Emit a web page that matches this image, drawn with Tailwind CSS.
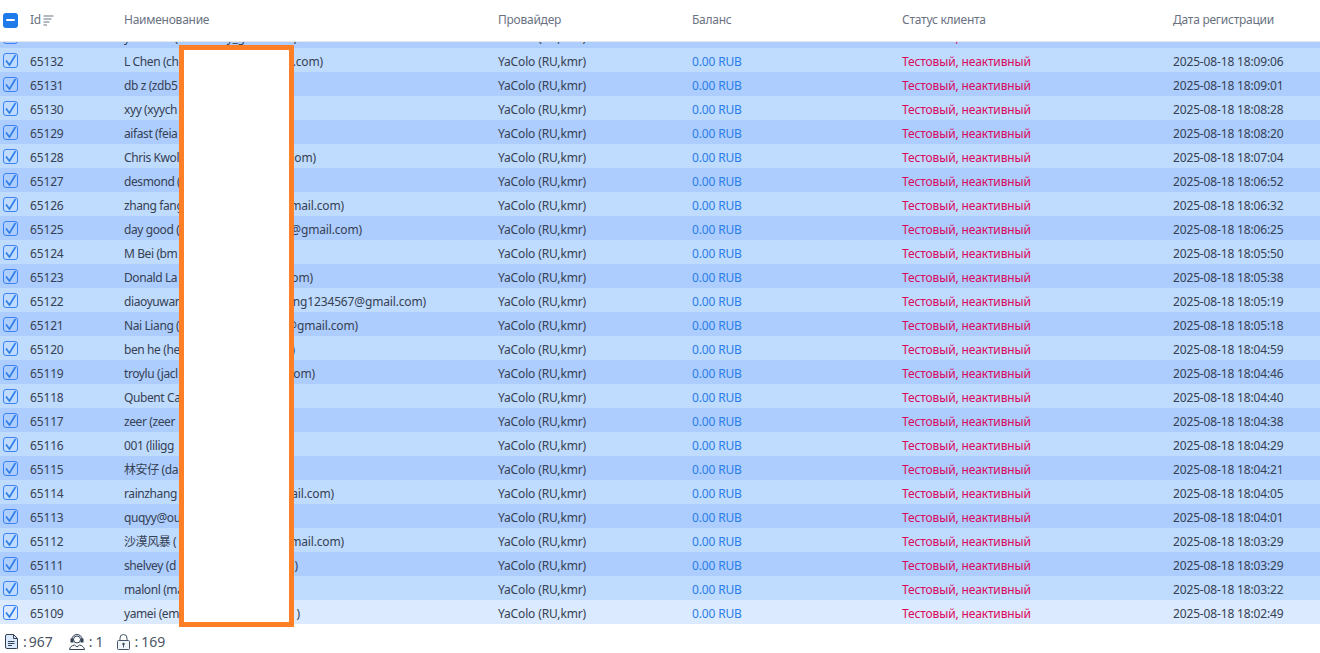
<!DOCTYPE html>
<html lang="ru">
<head>
    <meta charset="UTF-8">
    <title>Клиенты</title>
    <script src="https://cdn.jsdelivr.net/npm/@tailwindcss/browser@4"></script>
</head>
<body class="bg-white overflow-hidden font-['Noto_Sans','Noto_Sans_CJK_SC',sans-serif] text-xs tracking-[-0.15px] text-gray-700">
<div class="relative h-[653px] w-[1320px] flex flex-col">
    <!-- header -->
    <div class="relative z-10 h-[42px] shrink-0 grid grid-cols-[30px_94px_374px_194px_210px_271px_147px] items-center bg-white pb-px tracking-[-0.25px] text-gray-500 border-b border-gray-200">
        <div class="pl-[3px]">
            <span class="flex h-[15px] w-[15px] items-center justify-center rounded-[3px] bg-[#1f7aea]"><span class="h-[2px] w-[9px] rounded-sm bg-white"></span></span>
        </div>
        <div class="flex items-center gap-[2px]">Id
            <svg width="11" height="11" viewBox="0 0 11 11" fill="none" stroke="#6b7280" stroke-width="1"><path d="M0.500 1h10M0.500 4h8M0.500 7h6M0.500 10h3.500"/></svg>
        </div>
        <div>Наименование</div>
        <div>Провайдер</div>
        <div>Баланс</div>
        <div>Статус клиента</div>
        <div>Дата регистрации</div>
    </div>

    <!-- rows -->
    <div id="rows" class="h-[582px] shrink-0 overflow-hidden"></div>

    <!-- footer -->
    <div class="flex h-[29px] shrink-0 items-center pl-[5px] pt-[6px] text-sm leading-none tracking-normal text-gray-600">
        <svg width="13" height="16" viewBox="0 0 13 16" fill="#dbeafe" stroke="#334155" stroke-width="1"><path d="M0.500 2a1.500 1.500 0 0 1 1.500-1.500h6.500l4 4v9.500a.5 .5 0 0 1-1 .5H2a1.500 1.500 0 0 1-1.500-1.500z"/><path d="M8.500 .5v4h4" fill="none"/><path d="M3 7.500h6.500M3 9.500h6.500M3 11.500h4" fill="none"/></svg>
        <span class="ml-[5px]">:</span><span class="ml-[2px]">967</span>
        <svg class="ml-[16px]" width="16" height="16" viewBox="0 0 16 16" fill="none" stroke="#334155" stroke-width="1"><circle cx="8" cy="5.500" r="3.500"/><path d="M3 6.500v-1.500a5 4.500 0 0 1 10 0v1.500"/><path d="M.5 15.500c.3-2.500 2.500-4 5-4.500l2.500 2 2.500-2c2.500 .5 4.700 2 5 4.500z"/><rect x="2" y="5" width="2" height="3" fill="#334155"/><rect x="12" y="5" width="2" height="3" fill="#334155"/></svg>
        <span class="ml-[4px]">:</span><span class="ml-[3px]">1</span>
        <svg class="ml-[13px]" width="13" height="16" viewBox="0 0 13 16" fill="#f1f5f9" stroke="#475569" stroke-width="1"><path d="M3 7v-3a3.500 3.500 0 0 1 7 0v3" fill="none"/><rect x="0.500" y="6.500" width="12" height="9" rx="1"/><circle cx="6.500" cy="10" r="1.200" fill="#334155" stroke="none"/><path d="M6.500 10.500v3"/></svg>
        <span class="ml-[5px]">:</span><span class="ml-[3px]">169</span>
    </div>

    <!-- redaction box over the names -->
    <div class="absolute left-[179px] top-[45px] z-20 h-[582px] w-[115px] border-[5px] border-[#ff7f27] bg-white"></div>
</div>

<script>
    // id, date, visible start of the name, visible end of the name, x where the name ends
    const clients = [
        ['', '', 'ynnnnnn (nnnnnnny_gnnnnnnn)', '', 0],
        ['65132', '2025-08-18 18:09:06', 'L Chen (ch', '.com)', 323],
        ['65131', '2025-08-18 18:09:01', 'db z (zdb5', '', 0],
        ['65130', '2025-08-18 18:08:28', 'xyy (xyych', '', 0],
        ['65129', '2025-08-18 18:08:20', 'aifast (feia', '', 0],
        ['65128', '2025-08-18 18:07:04', 'Chris Kwol', 'om)', 316],
        ['65127', '2025-08-18 18:06:52', 'desmond (', '', 0],
        ['65126', '2025-08-18 18:06:32', 'zhang fang', 'mail.com)', 344],
        ['65125', '2025-08-18 18:06:25', 'day good (', '@gmail.com)', 362],
        ['65124', '2025-08-18 18:05:50', 'M Bei (bm', '', 0],
        ['65123', '2025-08-18 18:05:38', 'Donald La', 'om)', 313],
        ['65122', '2025-08-18 18:05:19', 'diaoyuwan', 'ng1234567@gmail.com)', 426],
        ['65121', '2025-08-18 18:05:18', 'Nai Liang (', '@gmail.com)', 358],
        ['65120', '2025-08-18 18:04:59', 'ben he (he', ')', 295],
        ['65119', '2025-08-18 18:04:46', 'troylu (jacl', 'om)', 315],
        ['65118', '2025-08-18 18:04:40', 'Qubent Ca', '', 0],
        ['65117', '2025-08-18 18:04:38', 'zeer (zeer', '', 0],
        ['65116', '2025-08-18 18:04:29', '001 (liligg', '', 0],
        ['65115', '2025-08-18 18:04:21', '林安仔 (da', '', 0],
        ['65114', '2025-08-18 18:04:05', 'rainzhang', 'ail.com)', 334],
        ['65113', '2025-08-18 18:04:01', 'quqyy@ou', '', 0],
        ['65112', '2025-08-18 18:03:29', '沙漠风暴 (', 'mail.com)', 344],
        ['65111', '2025-08-18 18:03:29', 'shelvey (d', ')', 298],
        ['65110', '2025-08-18 18:03:22', 'malonl (ma', '', 0],
        ['65109', '2025-08-18 18:02:49', 'yamei (em', ')', 300],
    ];

    const rows = document.getElementById('rows');
    clients.forEach(([id, date, start, end, endX], i) => {
        const last = i === clients.length - 1;
        const bg = last ? 'bg-[#dbeafe]' : (i % 2 ? 'bg-[#bfdbfe]' : 'bg-[#adcdfe]');
        const row = document.createElement('div');
        row.className = `${bg} h-6 pt-[3px] grid grid-cols-[30px_94px_374px_194px_210px_271px_147px] items-center ${i === 0 ? '-mt-[18px]' : ''}`;
        row.innerHTML = `
            <div class="pl-[3px] pb-[3px]">
                <span class="flex h-[15px] w-[15px] items-center justify-center rounded-[3px] border border-[#3b82f6]">
                    <svg width="13" height="13" viewBox="0 0 13 13" fill="none" stroke="#2b7de9" stroke-width="1.600"><path d="M2 6.500l3.500 4.500L11.500 1"/></svg>
                </span>
            </div>
            <div>${id}</div>
            <div class="grid">
                <span class="col-start-1 row-start-1 whitespace-nowrap tracking-[-0.4px]">${start}</span>
                ${end ? `<span class="col-start-1 row-start-1 whitespace-nowrap text-right" style="width:${endX - 124}px">${end}</span>` : ''}
            </div>
            <div>YaColo (RU,kmr)</div>
            <div class="text-[#2b7de9]">${id ? '0.00 RUB' : ''}</div>
            <div class="text-[#d9095b]">Тестовый, неактивный</div>
            <div>${date}</div>`;
        rows.appendChild(row);
    });
</script>
</body>
</html>
